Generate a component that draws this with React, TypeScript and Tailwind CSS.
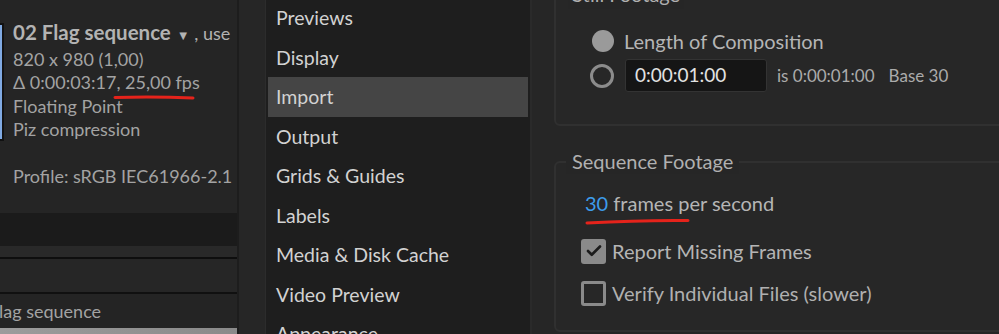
import { Check } from 'lucide-react';

const menu = [
  'Previews',
  'Display',
  'Import',
  'Output',
  'Grids & Guides',
  'Labels',
  'Media & Disk Cache',
  'Video Preview',
  'Appearance',
];

const font = { fontFamily: 'Lato, "Open Sans", sans-serif' };

export default function App() {
  return (
    <div className="relative flex h-[334px] w-[999px] overflow-hidden bg-[#262626]" style={font}>
      {/* project panel */}
      <div className="flex w-[237px] shrink-0 flex-col bg-[#252525]">
        <div className="flex h-[213px] overflow-hidden">
          <div className="ml-[-60px] mt-[23px] h-[118px] w-[64px] shrink-0 border-2 border-[#111] bg-[#7fa9e2]" />
          <div className="ml-[9px] mt-[21px] flex flex-col whitespace-nowrap text-[18px] leading-[23.5px] text-[#a3a3a3]">
            <div className="text-[#b3b3b3]">
              <span className="text-[20.5px] font-bold">02 Flag sequence</span>
              <span className="ml-[6px] text-[13px]">▼</span>
              <span> , use</span>
            </div>
            <div>820 x 980 (1,00)</div>
            <div>Δ 0:00:03:17, 25,00 fps</div>
            <div>Floating Point</div>
            <div>Piz compression</div>
            <div className="mt-[23.5px]">Profile: sRGB IEC61966-2.1 (</div>
          </div>
        </div>
        <div className="h-[33px] bg-[#1b1b1b]" />
        <div className="h-[11px] bg-[#292929]" />
        <div className="h-[2px] bg-[#0e0e0e]" />
        <div className="h-[33px] bg-[#262626]" />
        <div className="h-[2px] bg-[#101010]" />
        <div className="flex h-[34px] items-center overflow-hidden whitespace-nowrap bg-[#242424] text-[18px] text-[#a3a3a3]">
          <span className="ml-[-11px]">Flag sequence</span>
        </div>
        <div className="h-[6px] bg-gradient-to-r from-[#9c9c9c] to-[#8a8a8a]" />
      </div>

      {/* dialog gutter */}
      <div className="w-[28px] shrink-0 border-l-2 border-[#1d1d1d] bg-[#262626]" />

      {/* category list */}
      <div className="flex w-[265px] shrink-0 flex-col border-l border-[#2c2c2c] bg-[#1e1e1e] px-[2px]">
        <div className="mt-[-2px] flex flex-col">
          {menu.map((item) => (
            <div
              key={item}
              className={`flex h-[39.5px] items-center pl-[8px] text-[19.5px] text-[#d2d2d2] ${
                item === 'Import' ? 'bg-[#454545]' : ''
              }`}
            >
              {item}
            </div>
          ))}
        </div>
      </div>

      {/* settings */}
      <div className="w-[24px] shrink-0 border-l-2 border-[#2a2a2a] bg-[#262626]" />
      <div className="flex w-[480px] shrink-0 flex-col">
        <div className="relative mt-[-6px] h-[132px] rounded-md border-2 border-[#303030] bg-[#272727]">
          <span className="absolute left-[12px] top-[-17px] bg-[#262626] px-[4px] text-[20px] text-[#b0b0b0]">
            Still Footage
          </span>
          <div className="ml-[36px] mt-[30px] flex items-center gap-[10px]">
            <div className="h-[22px] w-[22px] rounded-full bg-[#9a9a9a]" />
            <span className="text-[20px] text-[#b5b5b5]">Length of Composition</span>
          </div>
          <div className="ml-[34px] mt-[3px] flex items-center">
            <div className="h-[24px] w-[24px] rounded-full border-[3px] border-[#8c8c8c]" />
            <div className="ml-[11px] flex h-[33px] w-[142px] items-center rounded-[3px] border border-[#333] bg-[#151515] pl-[9px] text-[19px] text-[#e2e2e2]">
              0:00:01:00
            </div>
            <span className="ml-[10px] text-[17px] text-[#ababab]">is 0:00:01:00</span>
            <span className="ml-[14px] text-[17px] text-[#ababab]">Base 30</span>
          </div>
        </div>

        <div className="relative mt-[35px] h-[171px] rounded-md border-2 border-[#303030] bg-[#272727]">
          <span className="absolute left-[10px] top-[-15px] bg-[#262626] px-[6px] text-[20px] leading-[26px] text-[#b0b0b0]">
            Sequence Footage
          </span>
          <div className="ml-[29px] mt-[27px] text-[20px] leading-[26px] text-[#b5b5b5]">
            <span className="text-[#3d9ceb]">30</span> frames per second
          </div>
          <div className="ml-[25px] mt-[20px] flex items-center gap-[6px]">
            <div className="flex h-[25px] w-[25px] items-center justify-center rounded-[3px] bg-[#8a8a8a]">
              <Check size={18} strokeWidth={3.5} color="#1c1c1c" />
            </div>
            <span className="text-[20px] text-[#b5b5b5]">Report Missing Frames</span>
          </div>
          <div className="ml-[25px] mt-[12px] flex items-center gap-[6px]">
            <div className="h-[25px] w-[25px] rounded-[3px] border-[3px] border-[#8a8a8a]" />
            <span className="text-[20px] text-[#b0b0b0]">Verify Individual Files (slower)</span>
          </div>
        </div>
      </div>

      {/* red annotation marks */}
      <svg className="pointer-events-none absolute left-0 top-0" width="999" height="334">
        <path d="M115 97.5 Q155 96.5 193 98" stroke="#e5231b" strokeWidth="3" fill="none" strokeLinecap="round" />
        <path d="M587 223 Q640 220 688 220.5" stroke="#e5231b" strokeWidth="3" fill="none" strokeLinecap="round" />
      </svg>
    </div>
  );
}
